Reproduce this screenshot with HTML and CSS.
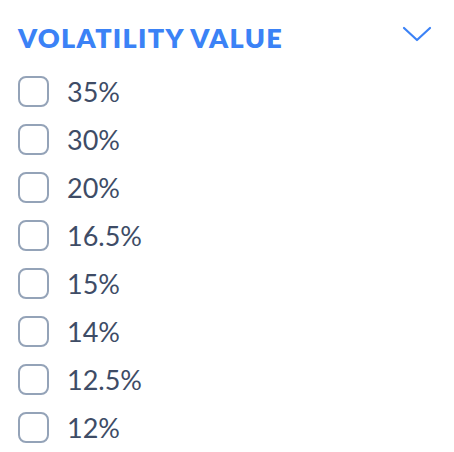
FILE: index.html
```html
<!DOCTYPE html>
<html lang="en">
<head>
    <meta charset="UTF-8">
    <title>Volatility Value</title>
    <link rel="stylesheet" href="styles.css">
</head>
<body>
    <div class="filter">
        <div class="filter-header">
            <span class="filter-title">Volatility Value</span>
            <svg class="chevron" width="30" height="16" viewBox="0 0 30 16">
                <path d="M2 2 L15 14 L28 2" fill="none" stroke="#3b82f6" stroke-width="2.2" stroke-linecap="round" stroke-linejoin="round"/>
            </svg>
        </div>

        <ul class="option-list">
            <li class="option"><span class="box"></span><span class="label">35%</span></li>
            <li class="option"><span class="box"></span><span class="label">30%</span></li>
            <li class="option"><span class="box"></span><span class="label">20%</span></li>
            <li class="option"><span class="box"></span><span class="label">16.5%</span></li>
            <li class="option"><span class="box"></span><span class="label">15%</span></li>
            <li class="option"><span class="box"></span><span class="label">14%</span></li>
            <li class="option"><span class="box"></span><span class="label">12.5%</span></li>
            <li class="option"><span class="box"></span><span class="label">12%</span></li>
        </ul>
    </div>
</body>
</html>
```

FILE: styles.css
```css
body {
    margin: 0;
    background-color: #fff;
    font-family: Lato, "Open Sans", sans-serif;
}

.filter {
    padding: 18px 22px 0 18px;
}

.filter-header {
    display: flex;
    justify-content: space-between;
    align-items: center;
    height: 38px;
}

.filter-title {
    color: #3b82f6;
    font-size: 27px;
    font-weight: 800;
    text-transform: uppercase;
    letter-spacing: 1.3px;
}

.chevron {
    margin: 0 0 6px 0;
}

.option-list {
    list-style: none;
    padding: 0;
    margin: 11px 0 0 0;
}

.option {
    display: flex;
    align-items: center;
    height: 48px;
}

.box {
    width: 27px;
    height: 27px;
    border: 2px solid #94a3b8;
    border-radius: 8px;
    margin-right: 18px;
}

.label {
    color: #3e4c66;
    font-size: 27px;
}
```
